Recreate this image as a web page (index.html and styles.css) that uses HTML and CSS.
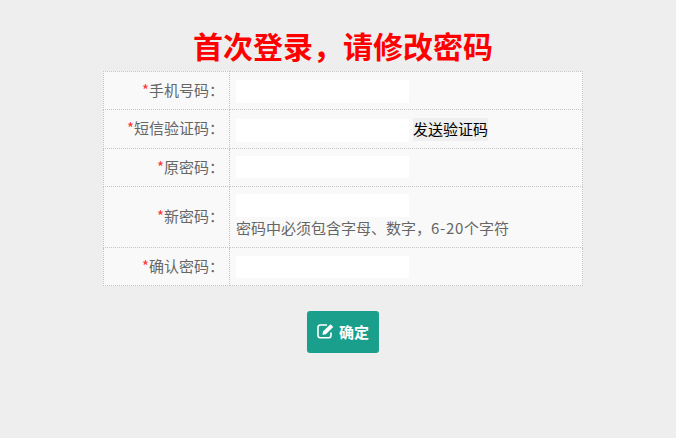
FILE: index.html
```html
<!DOCTYPE html>
<html lang="zh-CN">
<head>
    <meta charset="UTF-8">
    <title>首次登录</title>
    <link rel="stylesheet" href="styles.css">
</head>
<body>
    <div class="wrap">
        <h1 class="title">首次登录，请修改密码</h1>

        <table class="form-table">
            <tr>
                <th><span class="req">*</span>手机号码：</th>
                <td><input class="field" type="text"></td>
            </tr>
            <tr>
                <th><span class="req">*</span>短信验证码：</th>
                <td class="code-cell"><div class="code-row"><input class="field" type="text"><button class="send-btn" type="button">发送验证码</button></div></td>
            </tr>
            <tr>
                <th><span class="req">*</span>原密码：</th>
                <td class="tight-cell"><input class="field short" type="password"></td>
            </tr>
            <tr>
                <th><span class="req">*</span>新密码：</th>
                <td class="tight-cell">
                    <input class="field" type="password">
                    <div class="hint">密码中必须包含字母、数字，<span class="num">6-20</span>个字符</div>
                </td>
            </tr>
            <tr>
                <th><span class="req">*</span>确认密码：</th>
                <td class="last-cell"><input class="field short" type="password"></td>
            </tr>
        </table>

        <button class="ok-btn" type="button">
            <svg class="ok-icon" viewBox="0 0 18 16" width="18" height="16">
                <path d="M14 9.5V12.5A2.2 2.2 0 0 1 11.8 14.7H3.2A2.2 2.2 0 0 1 1 12.500V4.200A2.200 2.200 0 0 1 3.200 2H10" fill="none" stroke="#fff" stroke-width="1.6"/>
                <path d="M6 8.500L13.500 1.200L16.300 4L8.800 11.300L5.500 11.800Z" fill="#fff"/>
            </svg>
            确定
        </button>
    </div>
</body>
</html>
```

FILE: styles.css
```css
* {
    box-sizing: border-box;
}

body {
    margin: 0;
    background: #eeeeee;
    font-family: "Noto Sans CJK SC", "Liberation Sans", sans-serif;
    font-size: 15px;
    color: #666;
}

.wrap {
    display: flex;
    flex-direction: column;
    align-items: center;
    padding: 22px 0 0 10px;
}

/* Title */
.title {
    margin: 0 0 3px;
    height: 46px;
    font-size: 30px;
    line-height: 46px;
    font-weight: bold;
    color: #ff0000;
}

/* Form table */
.form-table {
    width: 480px;
    border-collapse: collapse;
    background: #f9f9f9;
}

.form-table th,
.form-table td {
    border: 1px dotted #c4c4c4;
    padding: 8px 6px 6px;
    font-weight: normal;
    line-height: 22px;
}

.form-table th {
    width: 126px;
    padding: 0 5px 2px 0;
    text-align: right;
    white-space: nowrap;
}

.form-table .code-cell {
    padding-top: 9px;
}

.form-table .tight-cell {
    padding: 7px 6px;
}

.form-table .last-cell {
    padding: 8px 6px 7px;
}

.req {
    color: #ff3333;
}

.field {
    display: block;
    width: 173px;
    height: 23px;
    padding: 0 6px;
    border: none;
    background: #fff;
}

.field.short {
    height: 22px;
    margin-bottom: 1px;
}

.last-cell .field.short {
    margin-bottom: 0;
}

.code-row {
    display: flex;
    align-items: flex-start;
    gap: 4px;
}

.send-btn {
    height: 23px;
    margin-top: -1px;
    padding: 0 0 2px;
    border: none;
    background: #efefef;
    font: inherit;
    line-height: 21px;
    color: #000;
}

.hint {
    height: 23px;
    line-height: 21px;
    white-space: nowrap;
}

.num {
    letter-spacing: 0.7px;
}

/* Confirm button */
.ok-btn {
    display: flex;
    align-items: center;
    justify-content: center;
    gap: 4px;
    width: 72px;
    height: 42px;
    margin-top: 25px;
    padding: 0 0 2px;
    border: none;
    border-radius: 3px;
    background: #1a9f8d;
    color: #fff;
    font: inherit;
    font-size: 15px;
    font-weight: 700;
}

.ok-icon {
    display: block;
}
```
